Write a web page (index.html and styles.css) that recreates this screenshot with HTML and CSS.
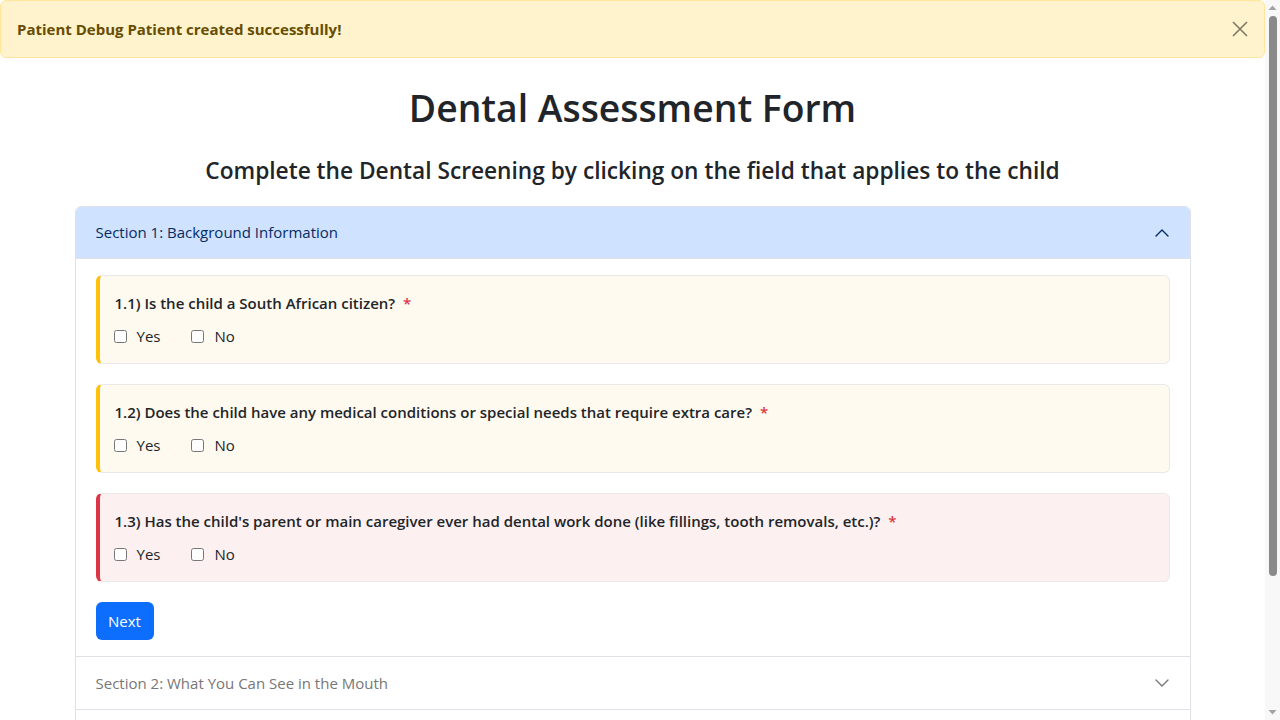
FILE: index.html
```html
<!DOCTYPE html>
<html lang="en">
<head>
<meta charset="utf-8">
<title>Dental Assessment Form</title>
<link rel="stylesheet" href="styles.css">
</head>
<body>
<div class="page">
  <div class="alert">
    <span class="alert-text">Patient Debug Patient created successfully!</span>
    <button class="alert-close" aria-label="Close">
      <svg width="16" height="16" viewBox="0 0 16 16"><path d="M1 1L15 15M15 1L1 15" stroke="#000" stroke-width="1.6" fill="none"/></svg>
    </button>
  </div>

  <main class="container">
    <h1 class="title">Dental Assessment Form</h1>
    <h3 class="subtitle">Complete the Dental Screening by clicking on the field that applies to the child</h3>

    <div class="accordion">
      <div class="acc-item">
        <div class="acc-header active">
          <span>Section 1: Background Information</span>
          <svg class="chev" width="16" height="16" viewBox="0 0 16 16"><path d="M2 11L8 5L14 11" fill="none" stroke="#052c65" stroke-width="1.4" stroke-linecap="round" stroke-linejoin="round"/></svg>
        </div>
        <div class="acc-body">
          <div class="q q-warn">
            <div class="q-label">1.1) Is the child a South African citizen? <span class="req">*</span></div>
            <div class="q-options">
              <label class="opt"><input type="checkbox"> Yes</label>
              <label class="opt"><input type="checkbox"> No</label>
            </div>
          </div>
          <div class="q q-warn">
            <div class="q-label">1.2) Does the child have any medical conditions or special needs that require extra care? <span class="req">*</span></div>
            <div class="q-options">
              <label class="opt"><input type="checkbox"> Yes</label>
              <label class="opt"><input type="checkbox"> No</label>
            </div>
          </div>
          <div class="q q-danger">
            <div class="q-label">1.3) Has the child's parent or main caregiver ever had dental work done (like fillings, tooth removals, etc.)? <span class="req">*</span></div>
            <div class="q-options">
              <label class="opt"><input type="checkbox"> Yes</label>
              <label class="opt"><input type="checkbox"> No</label>
            </div>
          </div>
          <button class="btn-next">Next</button>
        </div>
      </div>
      <div class="acc-item">
        <div class="acc-header muted">
          <span>Section 2: What You Can See in the Mouth</span>
          <svg class="chev" width="16" height="16" viewBox="0 0 16 16"><path d="M2 5L8 11L14 5" fill="none" stroke="#777" stroke-width="1.4" stroke-linecap="round" stroke-linejoin="round"/></svg>
        </div>
      </div>
      <div class="acc-item acc-more" aria-hidden="true"></div>
    </div>
  </main>
</div>

<div class="scrollbar" aria-hidden="true">
  <svg class="sb-arrow" width="15" height="15" viewBox="0 0 15 15"><path d="M3.5 10L7.5 5.5L11.5 10Z" fill="#a3a3a3"/></svg>
  <div class="sb-track"><div class="sb-thumb"></div></div>
  <svg class="sb-arrow" width="15" height="15" viewBox="0 0 15 15"><path d="M3.5 5L7.5 9.5L11.5 5Z" fill="#a3a3a3"/></svg>
</div>
</body>
</html>
```

FILE: styles.css
```css
* { box-sizing: border-box; }
html, body { margin: 0; padding: 0; }
body {
  font-family: "Open Sans", "Noto Sans", "Liberation Sans", sans-serif;
  color: #212529;
  background: #fff;
  font-size: 15px;
  line-height: 1.5;
}
.page {
  margin-right: 15px;
  padding-bottom: 40px;
}
.scrollbar {
  position: fixed;
  top: 0;
  right: 0;
  width: 15px;
  height: 720px;
  background: #f8f8f8;
  display: flex;
  flex-direction: column;
}
.sb-arrow { flex: none; display: block; }
.sb-track { flex: 1; padding: 1px 3px 0 4px; }
.sb-thumb {
  height: 560px;
  background: #8a8a8a;
  border-radius: 4px;
}
.alert {
  display: flex;
  align-items: center;
  justify-content: space-between;
  background: #fff3cd;
  border: 1px solid #ffe69c;
  border-radius: 6px;
  color: #664d03;
  padding: 16px 16px;
  height: 58px;
}
.alert-text { font-weight: 700; font-size: 15px; }
.alert-close {
  background: none;
  border: 0;
  padding: 0;
  opacity: 0.5;
  display: flex;
  width: 16px;
  height: 16px;
}
.container {
  max-width: 1140px;
  margin: 0 auto;
  padding: 0 12px;
}
.title {
  text-align: center;
  font-size: 37.3px;
  font-weight: 600;
  line-height: 48px;
  margin: 26px 0 0;
}
.subtitle {
  text-align: center;
  font-size: 22.7px;
  font-weight: 600;
  line-height: 34px;
  margin: 22px 0 18px;
}
.accordion {
  border: 1px solid #dee2e6;
  border-radius: 6px;
  overflow: hidden;
}
.acc-item + .acc-item { border-top: 1px solid #dee2e6; }
.acc-more { height: 52px; }
.acc-header {
  display: flex;
  align-items: center;
  justify-content: space-between;
  padding: 0 20px;
  height: 52px;
  font-size: 15px;
}
.acc-header.active {
  background: #cfe2ff;
  color: #052c65;
  border-bottom: 1px solid #dee2e6;
}
.acc-header.muted { color: #777; }
.chev { flex: none; }
.acc-body {
  padding: 16px 20px 16px;
  display: flex;
  flex-direction: column;
  align-items: flex-start;
}
.q {
  align-self: stretch;
  border: 1px solid #e9e9e9;
  border-left-width: 4px;
  border-radius: 6px;
  padding: 15px 15px 13px 15px;
  margin-bottom: 20px;
  height: 89px;
}
.q-warn { background: #fffaf0; border-left-color: #ffc107; }
.q-danger { background: #fcf1f0; border-left-color: #dc3545; }
.q-label {
  font-weight: 600;
  font-size: 15px;
  line-height: 24px;
}
.req { color: #dc3545; margin-left: 4px; }
.q-options {
  display: flex;
  gap: 32px;
  margin-top: 9px;
  line-height: 24px;
}
.opt {
  display: flex;
  align-items: center;
  gap: 10px;
  font-size: 15px;
}
.opt input {
  margin: 0 0 0 -1px;
  width: 13px;
  height: 13px;
}
.btn-next {
  background: #0d6efd;
  color: #fff;
  border: 0;
  border-radius: 6px;
  font-family: inherit;
  font-size: 15px;
  line-height: 22px;
  padding: 8px 12px;
  width: 58px;
  height: 38px;
}
```
